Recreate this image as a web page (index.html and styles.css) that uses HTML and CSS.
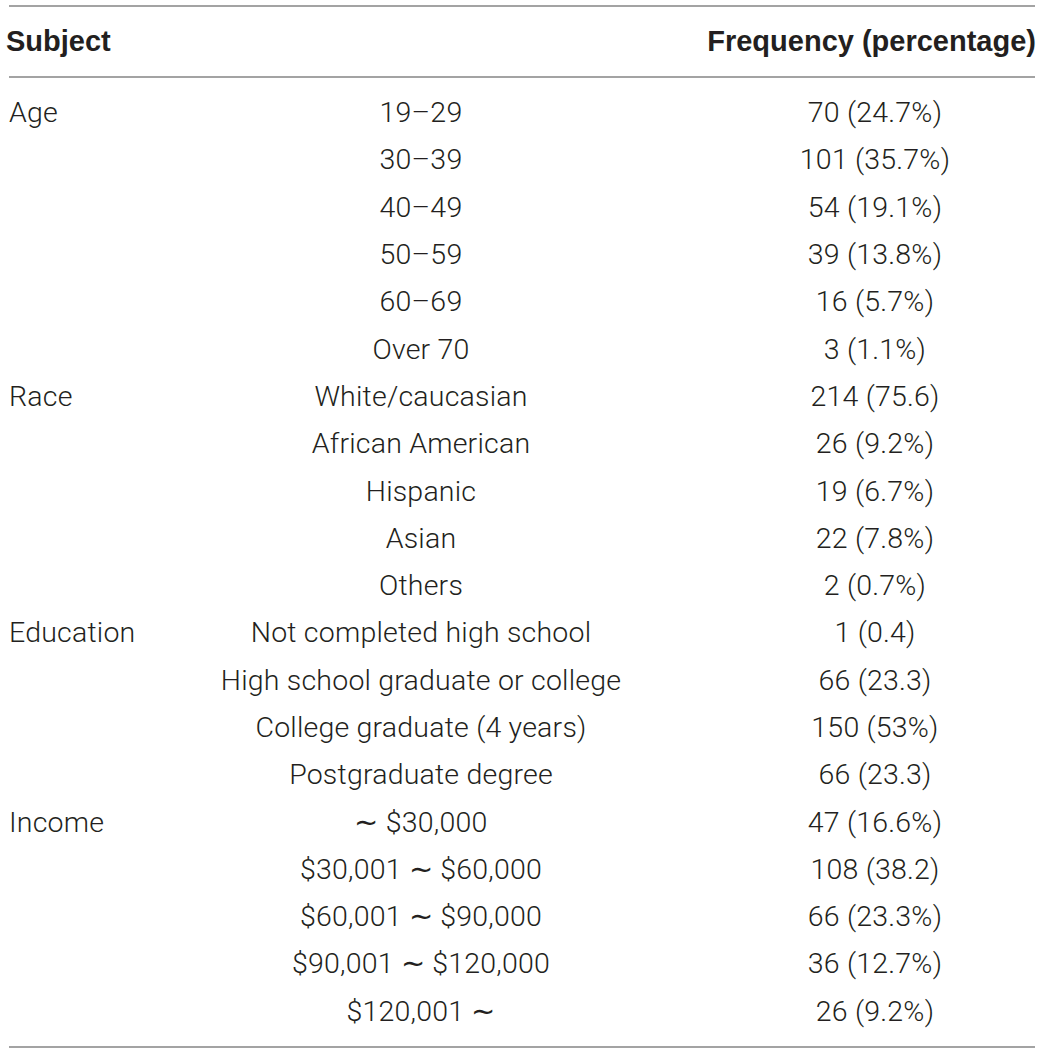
FILE: index.html
```html
<!DOCTYPE html>
<html>
<head>
<meta charset="utf-8">
<link rel="stylesheet" href="styles.css">
</head>
<body>
<div class="table">
  <div class="row head">
    <div class="c1">Subject</div>
    <div class="c2"></div>
    <div class="c3">Frequency (percentage)</div>
  </div>
  <div class="body">
    <div class="row"><div class="c1">Age</div><div class="c2">19–29</div><div class="c3">70 (24.7%)</div></div>
    <div class="row"><div class="c1"></div><div class="c2">30–39</div><div class="c3">101 (35.7%)</div></div>
    <div class="row"><div class="c1"></div><div class="c2">40–49</div><div class="c3">54 (19.1%)</div></div>
    <div class="row"><div class="c1"></div><div class="c2">50–59</div><div class="c3">39 (13.8%)</div></div>
    <div class="row"><div class="c1"></div><div class="c2">60–69</div><div class="c3">16 (5.7%)</div></div>
    <div class="row"><div class="c1"></div><div class="c2">Over 70</div><div class="c3">3 (1.1%)</div></div>
    <div class="row"><div class="c1">Race</div><div class="c2">White/caucasian</div><div class="c3">214 (75.6)</div></div>
    <div class="row"><div class="c1"></div><div class="c2">African American</div><div class="c3">26 (9.2%)</div></div>
    <div class="row"><div class="c1"></div><div class="c2">Hispanic</div><div class="c3">19 (6.7%)</div></div>
    <div class="row"><div class="c1"></div><div class="c2">Asian</div><div class="c3">22 (7.8%)</div></div>
    <div class="row"><div class="c1"></div><div class="c2">Others</div><div class="c3">2 (0.7%)</div></div>
    <div class="row"><div class="c1">Education</div><div class="c2">Not completed high school</div><div class="c3">1 (0.4)</div></div>
    <div class="row"><div class="c1"></div><div class="c2">High school graduate or college</div><div class="c3">66 (23.3)</div></div>
    <div class="row"><div class="c1"></div><div class="c2">College graduate (4 years)</div><div class="c3">150 (53%)</div></div>
    <div class="row"><div class="c1"></div><div class="c2">Postgraduate degree</div><div class="c3">66 (23.3)</div></div>
    <div class="row"><div class="c1">Income</div><div class="c2">∼ $30,000</div><div class="c3">47 (16.6%)</div></div>
    <div class="row"><div class="c1"></div><div class="c2">$30,001 ∼ $60,000</div><div class="c3">108 (38.2)</div></div>
    <div class="row"><div class="c1"></div><div class="c2">$60,001 ∼ $90,000</div><div class="c3">66 (23.3%)</div></div>
    <div class="row"><div class="c1"></div><div class="c2">$90,001 ∼ $120,000</div><div class="c3">36 (12.7%)</div></div>
    <div class="row"><div class="c1"></div><div class="c2">$120,001 ∼</div><div class="c3">26 (9.2%)</div></div>
  </div>
</div>
</body>
</html>
```

FILE: styles.css
```css
html, body {
  margin: 0;
  padding: 0;
  background: #ffffff;
}
body {
  font-family: Roboto, "Liberation Sans", Arial, sans-serif;
  font-weight: 300;
  color: #231f20;
  font-size: 28.5px;
  letter-spacing: 0.2px;
}
.table {
  margin: 5px 0 0 9px;
  width: 1026px;
  border-top: 2px solid #a3a3a3;
  border-bottom: 2px solid #a3a3a3;
}
.row {
  display: grid;
  grid-template-columns: 140px 544px 342px;
  height: 47.3px;
  align-items: center;
  white-space: nowrap;
}
.head {
  height: 69px;
  font-family: "Liberation Sans", Arial, sans-serif;
  font-weight: bold;
  font-size: 29px;
  letter-spacing: 0;
  border-bottom: 2px solid #a3a3a3;
}
.body {
  padding: 11px 0 11px;
}
.c1 {
  text-align: left;
}
.c2 {
  text-align: center;
}
.c3 {
  text-align: center;
  padding-left: 22px;
}
.head .c1 {
  margin-left: -3px;
}
.head .c3 {
  text-align: right;
  padding-left: 0;
  padding-right: 0;
  margin-right: -1px;
}
```
